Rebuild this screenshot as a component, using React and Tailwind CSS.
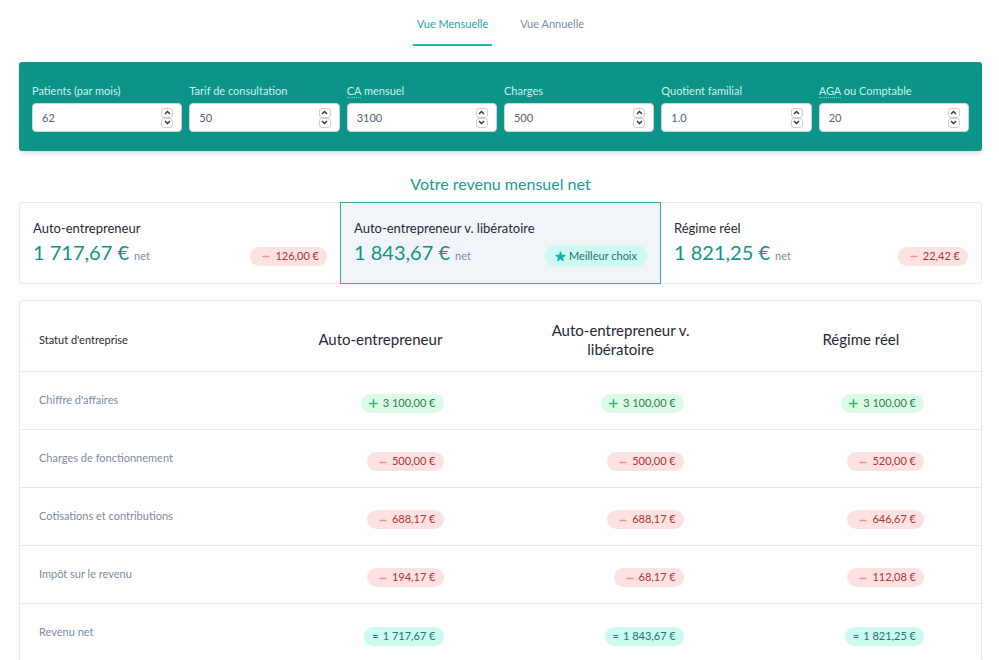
import React, { useState } from "react";

const fields = [
  { id: "patients", label: "Patients (par mois)", value: "62" },
  { id: "tarif", label: "Tarif de consultation", value: "50" },
  { id: "ca", abbr: "CA", label: " mensuel", value: "3100" },
  { id: "charges", label: "Charges", value: "500" },
  { id: "quotient", label: "Quotient familial", value: "1.0" },
  { id: "aga", abbr: "AGA", label: " ou Comptable", value: "20" },
];

const results = [
  { name: "Auto-entrepreneur", net: "1 717,67 €", diff: "126,00 €" },
  { name: "Auto-entrepreneur v. libératoire", net: "1 843,67 €", best: true },
  { name: "Régime réel", net: "1 821,25 €", diff: "22,42 €" },
];

const rows = [
  { label: "Chiffre d'affaires", kind: "plus", values: ["3 100,00 €", "3 100,00 €", "3 100,00 €"] },
  { label: "Charges de fonctionnement", kind: "minus", values: ["500,00 €", "500,00 €", "520,00 €"] },
  { label: "Cotisations et contributions", kind: "minus", values: ["688,17 €", "688,17 €", "646,67 €"] },
  { label: "Impôt sur le revenu", kind: "minus", values: ["194,17 €", "68,17 €", "112,08 €"] },
  { label: "Revenu net", kind: "total", values: ["1 717,67 €", "1 843,67 €", "1 821,25 €"] },
];

const badgeStyles = {
  plus: "bg-[#dcfce7] text-[#2f7d4f] pl-2",
  minus: "bg-[#fee2e2] text-[#ab3434] pl-3",
  total: "bg-[#ccfbf1] text-[#24756e] pl-2",
};

const Badge = ({ kind, children }) => (
  <span className={`inline-flex h-[19px] items-center whitespace-nowrap rounded-full pr-2 text-[11px] ${badgeStyles[kind]}`}>
    {kind === "plus" && (
      <svg className="mr-[5px] h-[9px] w-[9px] stroke-[#22c55e]" viewBox="0 0 9 9" strokeWidth="1.5" strokeLinecap="round">
        <path d="M4.5 0.8v7.4M0.8 4.5h7.4" />
      </svg>
    )}
    {kind === "minus" && (
      <svg className="mr-[5px] h-2 w-2 stroke-[#f58e8e]" viewBox="0 0 8 8" strokeWidth="1.3" strokeLinecap="round">
        <path d="M1 4.5h6" />
      </svg>
    )}
    {kind === "total" && <span className="mr-1">=</span>}
    {children}
  </span>
);

const Chevron = ({ up }) => (
  <svg className="h-[5px] w-[7px]" viewBox="0 0 7 5" fill="none" stroke="#333" strokeWidth="1.4">
    <path d={up ? "M1 4l2.5-2.5L6 4" : "M1 1l2.5 2.5L6 1"} />
  </svg>
);

const NumberField = ({ field }) => {
  const [value, setValue] = useState(field.value);
  const step = (n) => setValue(String(Number(value) + n));

  return (
    <div className="min-w-0">
      <label htmlFor={field.id} className="block text-[11px] leading-4 text-[#c9f3ec]">
        {field.abbr && (
          <abbr className="border-b border-dotted border-[#7fcfc5] no-underline">{field.abbr}</abbr>
        )}
        {field.label}
      </label>
      <div className="relative mt-1">
        <input
          id={field.id}
          type="number"
          value={value}
          onChange={(e) => setValue(e.target.value)}
          className="h-[29px] w-full appearance-none rounded border border-[#cbd5e1] bg-white px-[9px] text-[11px] text-[#52617a] [appearance:textfield] [&::-webkit-inner-spin-button]:appearance-none"
        />
        <div className="absolute inset-y-0 right-[9px] flex flex-col justify-center">
          <button type="button" aria-label="Augmenter" onClick={() => step(1)} className="flex h-[10px] w-3 items-center justify-center rounded-[3px] border border-[#cfcfcf] bg-white">
            <Chevron up />
          </button>
          <button type="button" aria-label="Diminuer" onClick={() => step(-1)} className="flex h-[10px] w-3 items-center justify-center rounded-[3px] border border-[#cfcfcf] bg-white">
            <Chevron />
          </button>
        </div>
      </div>
    </div>
  );
};

const ResultCard = ({ result }) => (
  <div
    className={`flex h-[82px] items-end justify-between border px-[13px] pb-[13px] ${
      result.best
        ? "border-[#3aa99f] bg-[#f1f5f9]"
        : "border-[#e5e9f1] first:rounded-l first:border-r-0 last:rounded-r last:border-l-0"
    }`}
  >
    <div className="min-w-0 whitespace-nowrap">
      <h3 className="text-[13px] leading-5 text-[#1e293b]">{result.name}</h3>
      <p className="text-[20px] leading-7 text-[#0d9488]">
        {result.net} <span className="text-[11px] text-[#7c8ba1]">net</span>
      </p>
    </div>
    <div className="-ml-20 flex h-7 items-center">
      {result.best ? (
        <span className="inline-flex h-[22px] items-center gap-[3px] whitespace-nowrap rounded-full bg-[#ccfbf1] px-[10px] text-[11px] text-[#24756e]">
          <svg className="h-[11px] w-[11px] fill-[#14b8a6]" viewBox="0 0 20 20">
            <path d="M9.049 1.427c.3-.921 1.603-.921 1.902 0l1.57 4.74a1 1 0 00.95.69h4.962c.969 0 1.371 1.24.588 1.81l-4 2.934a1 1 0 00-.364 1.118l1.52 4.674c.3.921-.755 1.688-1.54 1.118l-4.03-2.9a1 1 0 00-1.175 0l-4.03 2.9c-.784.57-1.838-.197-1.539-1.118l1.52-4.674a1 1 0 00-.364-1.118L1.02 8.667c-.783-.57-.38-1.81.588-1.81h4.96a1 1 0 00.951-.69z" />
          </svg>
          Meilleur choix
        </span>
      ) : (
        <Badge kind="minus">{result.diff}</Badge>
      )}
    </div>
  </div>
);

const App = () => {
  const [view, setView] = useState("mensuelle");
  const tabClass = (name) =>
    `h-[46px] border-b-2 px-1 pt-1 text-[11px] leading-4 ${
      view === name ? "border-[#2bb3a7] text-[#1ba99c]" : "border-transparent text-[#7c8ba1]"
    }`;

  return (
    <div className="bg-white pr-[17px] pl-[19px] font-[Lato,sans-serif]">
      <nav className="flex justify-center gap-6">
        <button type="button" onClick={() => setView("mensuelle")} className={tabClass("mensuelle")}>
          Vue Mensuelle
        </button>
        <button type="button" onClick={() => setView("annuelle")} className={tabClass("annuelle")}>
          Vue Annuelle
        </button>
      </nav>

      <form className="mt-4 grid grid-cols-6 gap-[7px] rounded-[3px] bg-[#0d9488] px-[13px] pt-[21px] pb-[19px] shadow-md">
        {fields.map((field) => (
          <NumberField key={field.id} field={field} />
        ))}
      </form>

      <h2 className="mt-[23px] text-center text-base leading-5 text-[#219b90]">Votre revenu mensuel net</h2>

      <div className="mt-2 grid grid-cols-3">
        {results.map((result) => (
          <ResultCard key={result.name} result={result} />
        ))}
      </div>

      <div className="mt-4 rounded border border-[#e5e9f1]">
        <table className="w-full table-fixed">
          <thead>
            <tr className="h-[70px] text-[#1e293b]">
              <th scope="col" className="pt-2 pl-[19px] text-left text-[11px] font-normal">Statut d'entreprise</th>
              {results.map((result) => (
                <th key={result.name} scope="col" className="px-8 pt-2 text-center text-[15px] leading-[19px] font-normal">
                  {result.name}
                </th>
              ))}
            </tr>
          </thead>
          <tbody>
            {rows.map((row) => (
              <tr key={row.label} className="h-[58px] border-t border-[#e5e9f1]">
                <th scope="row" className="pl-[19px] text-left text-[11px] font-normal whitespace-nowrap text-[#7c8ba1]">
                  {row.label}
                </th>
                {row.values.map((value, i) => (
                  <td key={i} className="pt-[3px] pr-[57px] text-right">
                    <Badge kind={row.kind}>{value}</Badge>
                  </td>
                ))}
              </tr>
            ))}
          </tbody>
        </table>
      </div>
    </div>
  );
};

export default App;
